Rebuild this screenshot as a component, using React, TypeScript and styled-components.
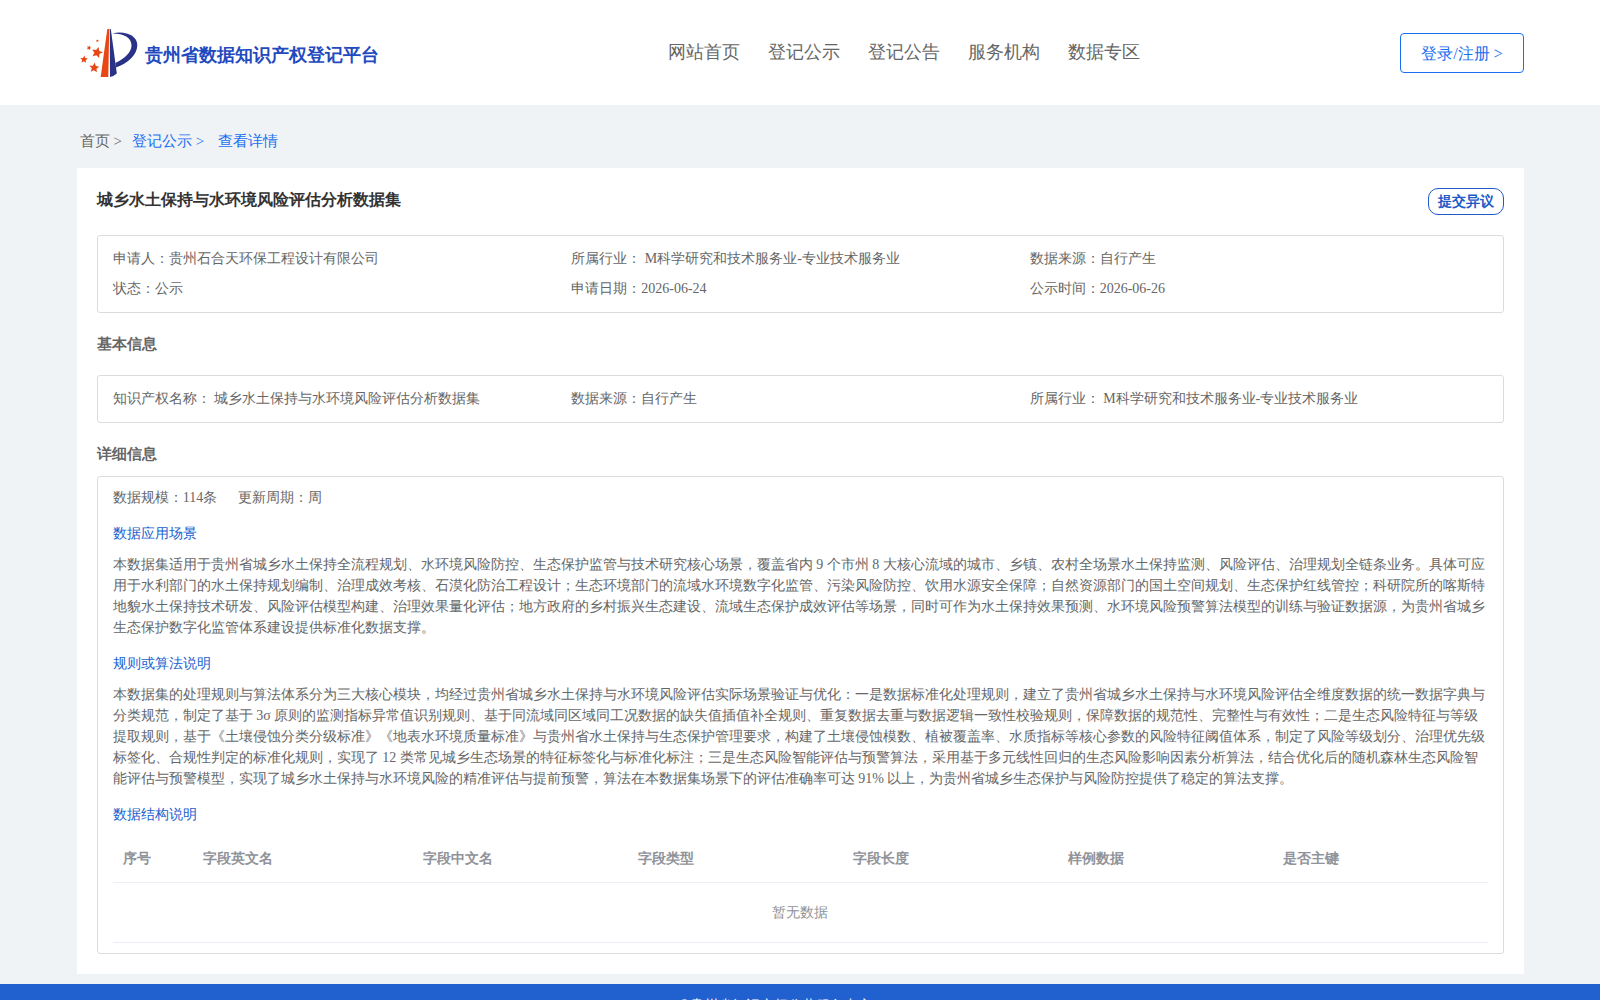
import React from "react";
import styled, { createGlobalStyle } from "styled-components";

const Global = createGlobalStyle`
  * { box-sizing: border-box; }
  html, body { margin: 0; padding: 0; height: 100%; overflow: hidden; }
  body { font-family: "Liberation Serif", serif; font-size: 14px; color: #666; background: #eff3f6; }
`;

const Page = styled.div`
  height: 1000px;
  overflow: hidden;
  display: flex;
  flex-direction: column;
  background: #eff3f6;
`;
const Header = styled.header`
  height: 105px;
  flex: none;
  background: #fff;
  padding: 0 76px 0 80px;
  display: flex;
  justify-content: space-between;
`;
const Brand = styled.div`
  width: 588px;
  padding-top: 28px;
  display: flex;
  gap: 7px;
`;
const BrandName = styled.div`
  font-size: 18px;
  line-height: 26px;
  margin-top: 14px;
  font-weight: bold;
  color: #2249be;
`;
const Nav = styled.nav`
  flex: 1;
  display: flex;
  gap: 28px;
  padding-top: 39px;
  font-size: 18px;
  line-height: 26px;
`;
const Login = styled.button`
  width: 124px;
  height: 40px;
  margin-top: 33px;
  padding: 2px 0 0;
  border: 1px solid #1a6ff0;
  border-radius: 4px;
  background: #fff;
  color: #1a6ff0;
  font: 16px/36px "Liberation Serif", serif;
`;
const Crumbs = styled.div`
  flex: none;
  height: 63px;
  padding: 25px 79.8px 0;
  font-size: 15px;
  line-height: 22px;
  display: flex;
`;
const Crumb = styled.span<{ $active?: boolean; $gap?: number }>`
  color: ${(p) => (p.$active ? "#1a6ff0" : "#666")};
  margin-right: ${(p) => p.$gap ?? 0}px;
  white-space: pre;
`;
const Card = styled.main`
  flex: none;
  height: 806px;
  margin: 0 76.2px 0 76.8px;
  padding: 20px;
  background: #fff;
`;
const TitleRow = styled.div`
  display: flex;
  justify-content: space-between;
  height: 47px;
`;
const Title = styled.h1`
  margin: 0;
  font-size: 16px;
  line-height: 24px;
  color: #333;
`;
const Objection = styled.button`
  width: 76px;
  height: 27px;
  padding: 0;
  border: 1px solid #2059c8;
  border-radius: 10px;
  background: #fff;
  color: #2059c8;
  font: bold 14px/25px "Liberation Serif", serif;
`;
const Box = styled.section<{ $height: number; $top?: number }>`
  height: ${(p) => p.$height}px;
  padding: ${(p) => p.$top ?? 8}px 15px 0;
  border: 1px solid #dcdcdc;
  border-radius: 3px;
`;
const Fields = styled.div`
  display: grid;
  grid-template-columns: 33.34% 33.34% 1fr;
  line-height: 30px;
`;
const Heading = styled.h2<{ $height: number }>`
  margin: 0;
  height: ${(p) => p.$height}px;
  padding-top: 20px;
  font-size: 15px;
  line-height: 22px;
`;
const Meta = styled.div`
  display: flex;
  gap: 21px;
  line-height: 21px;
`;
const SubTitle = styled.h3`
  margin: 15px 0 10px;
  font-size: 14px;
  font-weight: normal;
  line-height: 21px;
  color: #2160cf;
`;
const Text = styled.p`
  margin: 0;
  line-height: 21px;
`;
const Table = styled.div`
  color: #909399;
`;
const TableHead = styled.div`
  display: grid;
  grid-template-columns: 80px 220px repeat(4, 215px) 1fr;
  height: 48px;
  line-height: 47px;
  border-bottom: 1px solid #ebeef5;
  font-weight: bold;
`;
const Th = styled.div`
  padding-left: 10px;
`;
const Empty = styled.div`
  height: 60px;
  line-height: 59px;
  padding-right: 1px;
  border-bottom: 1px solid #ebeef5;
  text-align: center;
`;
const Footer = styled.footer`
  flex: none;
  margin-top: 10px;
  height: 80px;
  padding: 10px 0 0 679px;
  background: #2160cf;
  color: #fff;
  line-height: 24px;
`;

const starPoints = (cx: number, cy: number, r: number, turn: number) =>
  Array.from({ length: 10 }, (_, i) => {
    const radius = i % 2 ? r * 0.47 : r;
    const angle = ((i * 36 - 90 + turn) * Math.PI) / 180;
    return `${(cx + radius * Math.cos(angle)).toFixed(2)},${(cy + radius * Math.sin(angle)).toFixed(2)}`;
  }).join(" ");

const stars: [number, number, number, number][] = [
  [17.1, 24.6, 5.8, 15],
  [14.2, 39.8, 5.2, 5],
  [4, 31.5, 3.9, 5],
  [9, 19.8, 2.5, 20],
  [17.4, 12.8, 1.6, 0],
];

const Logo = () => (
  <svg width="58" height="50" viewBox="0 0 58 50">
    <path d="M27.300 1h1.900L28.300 49h-7.600z" fill="#e84612" />
    <path d="M29.800 1h1L36.800 45.500Q33.500 48.500 30 49z" fill="#2a3288" />
    <path
      d="M32.300 5.500C45 2.300 57.300 7.500 57.300 17C57.300 27 47.500 35.500 36 39.500L35.300 35C45 30.500 51.500 24 51.500 17.500C51.500 9.500 44 5.500 32.300 5.500z"
      fill="#2a3288"
    />
    <g fill="#e84612">
      {stars.map(([x, y, r, turn]) => (
        <polygon key={`${x}-${y}`} points={starPoints(x, y, r, turn)} />
      ))}
    </g>
  </svg>
);

const columns = ["序号", "字段英文名", "字段中文名", "字段类型", "字段长度", "样例数据", "是否主键"];

export default function App() {
  return (
    <Page>
      <Global />
      <Header>
        <Brand>
          <Logo />
          <BrandName>贵州省数据知识产权登记平台</BrandName>
        </Brand>
        <Nav>
          {["网站首页", "登记公示", "登记公告", "服务机构", "数据专区"].map((t) => (
            <span key={t}>{t}</span>
          ))}
        </Nav>
        <Login>登录/注册 &gt;</Login>
      </Header>
      <Crumbs>
        <Crumb $gap={10}>首页 &gt;</Crumb>
        <Crumb $active $gap={14}>登记公示 &gt;</Crumb>
        <Crumb $active>查看详情</Crumb>
      </Crumbs>
      <Card>
        <TitleRow>
          <Title>城乡水土保持与水环境风险评估分析数据集</Title>
          <Objection>提交异议</Objection>
        </TitleRow>
        <Box $height={78}>
          <Fields>
            <span>申请人：贵州石合天环保工程设计有限公司</span>
            <span>所属行业： M科学研究和技术服务业-专业技术服务业</span>
            <span>数据来源：自行产生</span>
            <span>状态：公示</span>
            <span>申请日期：2026-06-24</span>
            <span>公示时间：2026-06-26</span>
          </Fields>
        </Box>
        <Heading $height={62}>基本信息</Heading>
        <Box $height={48}>
          <Fields>
            <span>知识产权名称： 城乡水土保持与水环境风险评估分析数据集</span>
            <span>数据来源：自行产生</span>
            <span>所属行业： M科学研究和技术服务业-专业技术服务业</span>
          </Fields>
        </Box>
        <Heading $height={53}>详细信息</Heading>
        <Box $height={478} $top={10}>
          <Meta>
            <span>数据规模：114条</span>
            <span>更新周期：周</span>
          </Meta>
          <SubTitle>数据应用场景</SubTitle>
          <Text>
            本数据集适用于贵州省城乡水土保持全流程规划、水环境风险防控、生态保护监管与技术研究核心场景，覆盖省内 9 个市州 8 大核心流域的城市、乡镇、农村全场景水土保持监测、风险评估、治理规划全链条业务。具体可应用于水利部门的水土保持规划编制、治理成效考核、石漠化防治工程设计；生态环境部门的流域水环境数字化监管、污染风险防控、饮用水源安全保障；自然资源部门的国土空间规划、生态保护红线管控；科研院所的喀斯特地貌水土保持技术研发、风险评估模型构建、治理效果量化评估；地方政府的乡村振兴生态建设、流域生态保护成效评估等场景，同时可作为水土保持效果预测、水环境风险预警算法模型的训练与验证数据源，为贵州省城乡生态保护数字化监管体系建设提供标准化数据支撑。
          </Text>
          <SubTitle>规则或算法说明</SubTitle>
          <Text>
            本数据集的处理规则与算法体系分为三大核心模块，均经过贵州省城乡水土保持与水环境风险评估实际场景验证与优化：一是数据标准化处理规则，建立了贵州省城乡水土保持与水环境风险评估全维度数据的统一数据字典与分类规范，制定了基于 3σ 原则的监测指标异常值识别规则、基于同流域同区域同工况数据的缺失值插值补全规则、重复数据去重与数据逻辑一致性校验规则，保障数据的规范性、完整性与有效性；二是生态风险特征与等级提取规则，基于《土壤侵蚀分类分级标准》《地表水环境质量标准》与贵州省水土保持与生态保护管理要求，构建了土壤侵蚀模数、植被覆盖率、水质指标等核心参数的风险特征阈值体系，制定了风险等级划分、治理优先级标签化、合规性判定的标准化规则，实现了 12 类常见城乡生态场景的特征标签化与标准化标注；三是生态风险智能评估与预警算法，采用基于多元线性回归的生态风险影响因素分析算法，结合优化后的随机森林生态风险智能评估与预警模型，实现了城乡水土保持与水环境风险的精准评估与提前预警，算法在本数据集场景下的评估准确率可达 91% 以上，为贵州省城乡生态保护与风险防控提供了稳定的算法支撑。
          </Text>
          <SubTitle>数据结构说明</SubTitle>
          <Table>
            <TableHead>
              {columns.map((c) => (
                <Th key={c}>{c}</Th>
              ))}
            </TableHead>
            <Empty>暂无数据</Empty>
          </Table>
        </Box>
      </Card>
      <Footer>©贵州省知识产权公共服务中心</Footer>
    </Page>
  );
}
